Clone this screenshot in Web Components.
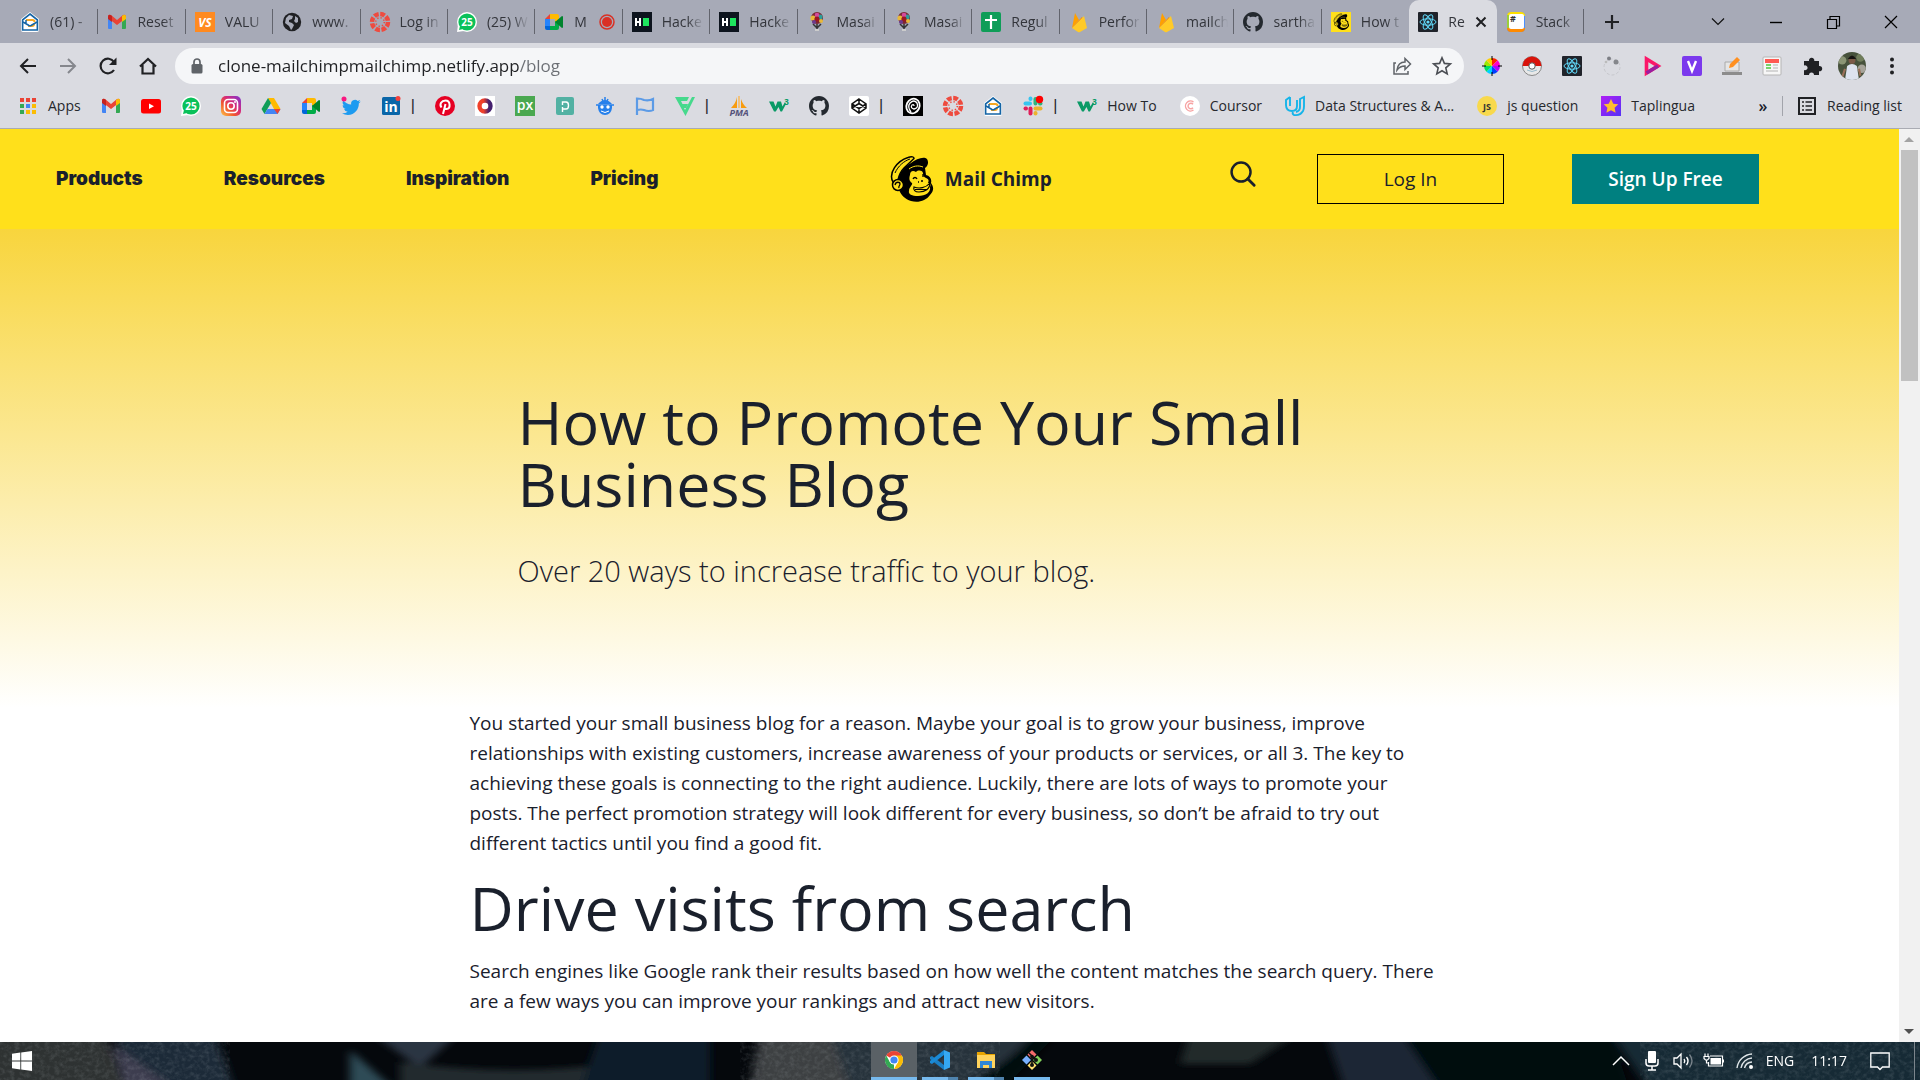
<!DOCTYPE html>
<html lang="en">
<head>
<meta charset="utf-8">
<title>How to Promote Your Small Business Blog</title>
<style>
html, body { height: 100%; margin: 0; }
body { font-family: "Open Sans", "Noto Sans", sans-serif; color: #1a202c; overflow: hidden; }
</style>
</head>
<body>
<desktop-screen></desktop-screen>
<script>
const GH = 'M8 0C3.58 0 0 3.58 0 8c0 3.54 2.29 6.53 5.47 7.59.4.07.55-.17.55-.38 0-.19-.01-.82-.01-1.49-2.01.37-2.53-.49-2.69-.94-.09-.23-.48-.94-.82-1.13-.28-.15-.68-.52-.01-.53.63-.01 1.08.58 1.23.82.72 1.21 1.87.87 2.33.66.07-.52.28-.87.51-1.07-1.78-.2-3.64-.89-3.64-3.95 0-.87.31-1.59.82-2.15-.08-.2-.36-1.02.08-2.12 0 0 .67-.21 2.2.82.64-.18 1.32-.27 2-.27.68 0 1.36.09 2 .27 1.53-1.04 2.2-.82 2.2-.82.44 1.1.16 1.92.08 2.12.51.56.82 1.27.82 2.15 0 3.07-1.87 3.75-3.65 3.95.29.25.54.73.54 1.48 0 1.07-.01 1.93-.01 2.2 0 .21.15.46.55.38A8.013 8.013 0 0016 8c0-4.42-3.58-8-8-8z';
const FREDDIE = `
<path d="M21 7C26 3 34 0 37 3c2 3 1 7-2 9l1 7c4 1 6 4 5 8 3 4 3 8-1 12-4 6-12 8-19 6-6-2-10-6-12-11l-1-10c1-7 6-13 13-17z"/>
<path d="M3 26C-2 17 7 5 18 1.500c4-1.500 6-.500 6 1L14 12c-3 3-5 7-6 12z" fill="#ffe01b" stroke="#000" stroke-width="1.500"/>
<path d="M5 17C8 10 14 5 20 3" fill="none" stroke="#000" stroke-width="1"/>
<path d="M20 19c0-4 3-5 6-3 2-2 6-2 7 1 0 3 1 4 3 5 3 1 3 3 2 5 3 0 3 2 2 4 1 5-4 9-12 9-6 0-10-2-9-5 0-4 4-6 3-8-3-2-3-5-2-8z" fill="#ffe01b"/>
<path d="M19 13c4-3 9-4 14-2" stroke="#ffe01b" stroke-width="1" fill="none"/>
<circle cx="8" cy="29" r="5.500" fill="#ffe01b" stroke="#000" stroke-width="1.500"/>
<path d="M5 29c1-4 5-3 5-1 0 2-2 2-1 4" fill="none" stroke="#000" stroke-width="1.300"/>
<path d="M23 23c1-2 3-2 4 0M33 18v3M28 26h1M31 25h2" stroke="#000" stroke-width="1.300" fill="none"/>
<path d="M24 31c5 2 12 1 16-4 0 6-5 9-11 9-4 0-6-2-5-5zM25 33.500h12" fill="none" stroke="#000" stroke-width="1.200"/>`;
const REACT = '<rect width="20" height="20" rx="1" fill="#20232a"/><g fill="none" stroke="#61dafb"><ellipse cx="10" cy="10" rx="8" ry="3.2"/><ellipse cx="10" cy="10" rx="8" ry="3.2" transform="rotate(60 10 10)"/><ellipse cx="10" cy="10" rx="8" ry="3.2" transform="rotate(120 10 10)"/></g><circle cx="10" cy="10" r="1.6" fill="#61dafb"/>';
const T = (s, x, y, size, fill, extra = '') => `<text x="${x}" y="${y}" font-size="${size}" fill="${fill}" text-anchor="middle" font-family="Open Sans" font-weight="700" ${extra}>${s}</text>`;
const MEET = '<path d="M1 7l5-5v5z" fill="#ea4335"/><path d="M1 7h5v7H1z" fill="#2684fc"/><path d="M1 14h5v4H3q-2 0-2-2z" fill="#0066da"/><path d="M6 2h7q2 0 2 2v4l-4 3V7H6z" fill="#ffba00"/><path d="M6 18h7q2 0 2-2v-4l-4-3v5H6z" fill="#00ac47"/><path d="M11 10l7-6q1 0 1 1v10q0 1-1 1z" fill="#00832d"/>';
const BIRD = 'M23.95 4.57a10 10 0 01-2.82.77 4.96 4.96 0 002.16-2.72c-.95.55-2 .96-3.13 1.18a4.92 4.92 0 00-8.38 4.48C7.69 8.09 4.07 6.13 1.64 3.16a4.92 4.92 0 001.52 6.57 4.9 4.9 0 01-2.23-.61v.06a4.92 4.92 0 003.95 4.83 4.9 4.9 0 01-2.21.08 4.94 4.94 0 004.6 3.42A9.87 9.87 0 010 19.54a13.99 13.99 0 007.55 2.21c9.05 0 14-7.5 14-13.98 0-.21 0-.42-.02-.63a9.94 9.94 0 002.46-2.55z';
const ICONS = {
  mail: '<path d="M10 0l9 7v11q0 2-2 2H3q-2 0-2-2V7z" fill="#fff"/><path d="M10 2l7.400 5.800V18H2.600V7.800z" fill="none" stroke="#1464a5" stroke-width="1.700"/><path d="M6 8h6.500q2 0 2 2M14 12q0 2-2 2H8" fill="none" stroke="#f7a823" stroke-width="2"/><path d="M3 10l6 3.500q1 .5 2 0l6-3.500M6 11V8" fill="none" stroke="#1464a5" stroke-width="1.500"/>',
  gmail: '<path d="M1 5v11q0 1 1 1h3V8z" fill="#4285f4"/><path d="M19 5v11q0 1-1 1h-3V8z" fill="#34a853"/><path d="M1 5q0-3 3-2l6 5 6-5q3-1 3 2v1l-9 7-9-7z" fill="#ea4335"/><path d="M15 4q4-3 4 1v2l-4 3z" fill="#fbbc04"/><path d="M5 4Q1 1 1 5v2l4 3z" fill="#c5221f"/>',
  vs: '<rect width="20" height="20" fill="#ff8a1f"/>' + T('VS', 10, 14.5, 12, '#fff', 'font-style="italic"'),
  globe: '<circle cx="10" cy="10" r="9.200" fill="#202124"/><path d="M4 6l3-3 4 1-1 3-3 1v2l3 1 2 2-2 4-1 1-2-4-4-3zM13 4l3 2v4l-2 1-2-2 1-2z" fill="#a8abb8"/>',
  canvas: '<circle cx="10" cy="10" r="8" fill="none" stroke="#ee4b3f" stroke-width="4.500" stroke-dasharray="4.700 1.580"/><circle cx="10" cy="10" r="4.300" fill="none" stroke="#ee4b3f" stroke-width="1.500" stroke-dasharray="1.300 2.080"/>',
  wa: '<circle cx="10" cy="10" r="10" fill="#fff"/><path d="M0 20l1-7 6 6z" fill="#fff"/><circle cx="10" cy="10" r="8.600" fill="#0ac15a"/><path d="M2 18l1-4 3 3z" fill="#0ac15a"/>' + T('25', 10, 13.5, 10, '#fff'),
  meet: MEET,
  rec: '<circle cx="10" cy="10" r="7" fill="none" stroke="#d93025" stroke-width="1.500"/><circle cx="10" cy="10" r="5" fill="#d93025"/>',
  hr: '<rect width="20" height="20" fill="#0d141e"/><path d="M4 6v8M8 6v8M4 10h4" stroke="#fff" stroke-width="2"/><rect x="11" y="6" width="6" height="8" fill="#1ee55e"/>',
  masai: '<path d="M6 12l4 4 4-4M10 12v6" stroke="#333" stroke-width="1.500" fill="none"/><circle cx="10" cy="6" r="6" fill="#7a2733"/><circle cx="6" cy="6" r="2.600" fill="#e8b83a"/><circle cx="13" cy="5" r="2.600" fill="#2d9e9a"/><circle cx="10" cy="3" r="2.300" fill="#d44a9a"/><circle cx="10" cy="7" r="2.600" fill="#9c1820"/><circle cx="14" cy="9" r="2" fill="#e8b83a"/><circle cx="7" cy="10" r="2" fill="#6c3a8c"/><path d="M8 17h4v2H8z" fill="#ccc"/>',
  sheet: '<rect width="20" height="20" rx="2" fill="#0f9d58"/><path d="M10 3v14M4 8h12" stroke="#fff" stroke-width="2.200"/>',
  fire: '<path d="M3 16L6 1l4 7z" fill="#ffa000"/><path d="M3 16L13 5l2 4z" fill="#f57c00"/><path d="M3 16L15 4l3 12-7 4q-1 .4-2 0z" fill="#ffca28"/>',
  gh: `<path transform="scale(1.25)" d="${GH}" fill="#24292f"/>`,
  chimp: `<rect width="20" height="20" fill="#ffe01b"/><g transform="translate(2.500 1.500) scale(.36)">${FREDDIE}</g>`,
  react: REACT,
  stack: '<rect x="1" y="0" width="18" height="20" rx="4" fill="#4a90ff"/><path d="M1 4q0-4 4-4h10q4 0 4 4z" fill="#ffe100"/><path d="M1 16h18q0 4-4 4H5q-4 0-4-4z" fill="#ff8a00"/><path d="M1 3h4v13H1z" fill="#9ccf3a"/><rect x="3" y="2" width="15" height="15" rx="2" fill="#fff"/>' + T('#', 7, 10, 9, '#333'),
  plus: '<path d="M10 3v14M3 10h14" stroke="#202124" stroke-width="2.200"/>',
  down: '<path d="M4 6.500l6 6 6-6" fill="none" stroke="#111" stroke-width="1.200"/>',
  min: '<path d="M4 10.500h12" stroke="#000" stroke-width="1.400"/>',
  max: '<path d="M4.500 7.500h9v9h-9zM7 7V4.500h9.500V14H14" fill="none" stroke="#000" stroke-width="1.200"/>',
  close: '<path d="M4 4l12 12M16 4L4 16" stroke="#000" stroke-width="1.200"/>',
  x: '<path d="M5.500 5.500l9 9M14.500 5.500l-9 9" stroke="#202124" stroke-width="2"/>',
  back: '<path d="M18 10H3M10 3l-7 7 7 7" fill="none" stroke="#202124" stroke-width="2"/>',
  fwd: '<path d="M2 10h15M10 3l7 7-7 7" fill="none" stroke="#85878d" stroke-width="2"/>',
  reload: '<path d="M16 14a7.300 7.300 0 110-8" fill="none" stroke="#202124" stroke-width="2.200"/><path d="M18.500 1.500v7.500H11z" fill="#202124"/>',
  home: '<path d="M2 10.500L10 3l8 7.500M4.500 9v8.500h11V9" fill="none" stroke="#202124" stroke-width="2.200"/>',
  lock: '<rect x="4.500" y="8" width="11" height="9.500" rx="1.500" fill="#5f6368"/><path d="M7 8V6a3 3 0 016 0v2" fill="none" stroke="#5f6368" stroke-width="1.700"/>',
  share: '<path d="M4 7H2v11h14v-3" fill="none" stroke="#5f6368" stroke-width="1.500"/><path d="M5 14q1-8 8-8V2.500l5.500 5.500L13 13.500V10q-5 0-8 4z" fill="none" stroke="#5f6368" stroke-width="1.500"/>',
  star: '<path d="M10 1.800l2.400 5.600 6 .500-4.600 4 1.400 6L10 14.700 4.800 17.900l1.400-6-4.600-4 6-.500z" fill="none" stroke="#4b4e54" stroke-width="1.600"/>',
  wheel: '<path d="M10 10V2a8 8 0 015.660 2.340z" fill="#ff2200"/><path d="M10 10l5.660-5.660A8 8 0 0118 10z" fill="#ff00c8"/><path d="M10 10h8a8 8 0 01-2.340 5.660z" fill="#b400ff"/><path d="M10 10l5.660 5.660A8 8 0 0110 18z" fill="#0040ff"/><path d="M10 10v8a8 8 0 01-5.660-2.340z" fill="#00cfff"/><path d="M10 10l-5.660 5.660A8 8 0 012 10z" fill="#00e060"/><path d="M10 10H2a8 8 0 012.340-5.660z" fill="#9be800"/><path d="M10 10L4.340 4.340A8 8 0 0110 2z" fill="#ffd000"/><path d="M10 0v4M10 16v4M0 10h4M16 10h4" stroke="#000"/>',
  ball: '<circle cx="10" cy="10" r="9.500" fill="#e8e8e8" stroke="#888"/><path d="M.5 10a9.500 9.500 0 0119 0z" fill="#d9130b"/><circle cx="10" cy="10" r="3.200" fill="#fff" stroke="#555"/><path d="M5 14q5 3 10 0" stroke="#9bc" fill="none"/>',
  dots: '<circle cx="10" cy="11" r="8" fill="none" stroke="#c6c7cc" stroke-dasharray="3 2"/><circle cx="7" cy="2.500" r="2" fill="#7d7f85"/><circle cx="14" cy="6" r="2.500" fill="#85878c"/><circle cx="4" cy="6" r="1.300" fill="#bbb"/>',
  play: '<path d="M4.500 3v14L16 10z" fill="none" stroke="#fb1768" stroke-width="3.600"/><path d="M4.500 17L16 10" stroke="#9a1ea0" stroke-width="3.600"/>',
  vv: '<rect width="20" height="20" rx="2" fill="#7b39ed"/><path d="M6 5l4 10 4-10" fill="none" stroke="#fff" stroke-width="2.400"/>',
  pencil: '<path d="M3 6h14v9H3z" fill="#e6e6e6" stroke="#aaa"/><path d="M0 16h20v3H0z" fill="#8c8c8c"/><path d="M7 12l1-4 7-7 3 3-7 7z" fill="#ff9020"/>',
  paper: '<rect x="1" y="1" width="18" height="18" rx="1" fill="#f7f7f7" stroke="#b5b5b5"/><path d="M3 3h14v4H3z" fill="#ff5a52"/><path d="M4 9h5M4 12h5" stroke="#79d36b" stroke-width="2"/><path d="M11 9h5M11 12h5M4 15h12" stroke="#d5d5d5" stroke-width="2"/>',
  puzzle: '<path d="M2 5h5a2.700 2.700 0 115.300 0H17v5a2.700 2.700 0 110 5.300V19h-5a2.500 2.500 0 10-5 0H2v-5a2.500 2.500 0 100-4.500z" fill="#202124"/>',
  avatar: '<defs><clipPath id="c"><circle cx="10" cy="10" r="10"/></clipPath></defs><g clip-path="url(#c)"><rect width="20" height="20" fill="#47523c"/><circle cx="3" cy="6" r="3" fill="#8b9575"/><circle cx="16" cy="4" r="3" fill="#707d5b"/><circle cx="17" cy="12" r="3" fill="#a7a49a"/><path d="M5 20l1.500-10q3.500-3 7 0L15 20z" fill="#dde3ef"/><path d="M5 12l-2 6M15 12l1 5" stroke="#9a7059" stroke-width="1.500"/><circle cx="10" cy="6" r="2.400" fill="#7b5a48"/><path d="M7 5q3-5 6 0z" fill="#171412"/></g>',
  more: '<g fill="#202124"><circle cx="10" cy="3.500" r="2"/><circle cx="10" cy="10" r="2"/><circle cx="10" cy="16.500" r="2"/></g>',
  apps: '<path d="M2 2h4v4H2zM8 2h4v4H8z" fill="#ea4335"/><path d="M14 2h4v4h-4z" fill="#ea4335"/><path d="M2 8h4v4H2z" fill="#34a853"/><path d="M8 8h4v4H8z" fill="#4285f4"/><path d="M14 8h4v4h-4z" fill="#fbbc04"/><path d="M2 14h4v4H2z" fill="#34a853"/><path d="M8 14h4v4H8zM14 14h4v4h-4z" fill="#fbbc04"/>',
  yt: '<rect y="3" width="20" height="14.500" rx="2.500" fill="#f00"/><path d="M8 7.500v5.500l5-2.700z" fill="#fff"/>',
  ig: '<defs><linearGradient id="g" x1="0" y1="1" x2="1" y2="0"><stop offset="0" stop-color="#fdc749"/><stop offset=".35" stop-color="#f1572e"/><stop offset=".6" stop-color="#d62a7a"/><stop offset="1" stop-color="#7a35d4"/></linearGradient></defs><rect width="20" height="20" rx="5" fill="url(#g)"/><rect x="3.500" y="3.500" width="13" height="13" rx="3.500" fill="none" stroke="#fff" stroke-width="1.600"/><circle cx="10" cy="10" r="3.200" fill="none" stroke="#fff" stroke-width="1.600"/><circle cx="14" cy="6" r="1" fill="#fff"/>',
  drive: '<path d="M7 2h6l6.500 11H13z" fill="#ffba00"/><path d="M7 2l3 5L3.500 18 .5 13z" fill="#0f9d58"/><path d="M6.500 13h13l-3 5h-13z" fill="#4285f4"/><path d="M13 13h6.500l-3 5z" fill="#ea4335"/>',
  bird: `<g transform="translate(1 2) scale(.78)"><path d="${BIRD}" fill="#1d9bf0"/></g><circle cx="3" cy="3" r="2.500" fill="#f91880"/>`,
  li: '<rect x="1" y="1" width="18" height="18" rx="1.500" fill="#0a66a8"/>' + T('in', 10, 15.500, 14, '#fff') + '<circle cx="17" cy="2.500" r="2.500" fill="#f5413c"/>',
  pin: '<circle cx="10" cy="10" r="10" fill="#e60023"/><path d="M8 18l2.500-10M6.500 11.500C4 8 6.500 4.500 10.500 4.500c5 0 5.500 8 1 8.500-1.500 0-2-1-2-1" fill="none" stroke="#fff" stroke-width="2"/>',
  ring: '<defs><linearGradient id="g"><stop offset=".35" stop-color="#f0402a"/><stop offset=".85" stop-color="#45206f"/></linearGradient></defs><rect width="20" height="20" fill="#fff"/><circle cx="10" cy="10" r="5.500" fill="none" stroke="url(#g)" stroke-width="4.400"/>',
  px: '<rect width="20" height="20" fill="#4aa850"/>' + T('px', 10, 14, 14, '#fff', 'style="font-weight:600"'),
  pp: '<rect x="1" y="1" width="18" height="18" rx="2" fill="#52b1a3"/><path d="M7.500 16v-5M7.500 13H11q2.500 0 2.500-3.500T11 6H7.500v3" fill="none" stroke="#fff" stroke-width="1.400"/>',
  robot: '<path d="M3 8q7-8 14 0z" fill="#2680eb"/><path d="M10 1v4M7 3l1 2M13 3l-1 2M1 9h18" stroke="#2680eb" stroke-width="1.500"/><path d="M3 9h14v3q-1 7-7 7t-7-7z" fill="#2680eb"/><circle cx="7" cy="11" r="1.700" fill="#fff"/><circle cx="13" cy="11" r="1.700" fill="#fff"/><path d="M6 15q4 3 8 0" stroke="#fff" fill="none"/>',
  flag: '<path d="M2 19V2.500q4 0 7 1.500 5 1 9-1v11q-4 2-9 0-3-1-7 0" fill="none" stroke="#5c9be6" stroke-width="2.200"/>',
  vtri: '<path d="M0 1h14l-2 4H6l1.500 3H13l-2 4H9l1 2L17 1h3L10.500 20z" fill="#45d98c"/>',
  pma: '<path d="M8 1q-1 6-6 11h6zM12 3v9h6q-4-3-6-9z" fill="#f89c0e"/><path d="M10 0v12" stroke="#f8b95a" stroke-width="1.500"/>' + T('PMA', 10, 19.500, 9, '#54527a', 'font-style="italic"'),
  w3: '<path d="M0 5.500h4.500l2 5 2-5H12l1.500 5L16 6l1 2-4 7.500h-1.500L9.500 11l-2.700 4.500H5z" fill="#0a9a66"/>' + T('3', 17.500, 8.500, 8, '#0a9a66'),
  cpen: '<rect width="20" height="20" rx="2" fill="#fff"/><path d="M10 3l7 5v4l-7 5-7-5V8zM3 8l7 4.500L17 8M3 12l7-4.500 7 4.500M10 3v4.500M10 12.500V17" fill="none" stroke="#111" stroke-width="1.500"/>',
  swirl: '<rect width="20" height="20" fill="#000"/><ellipse cx="10" cy="10" rx="6.500" ry="7.500" fill="none" stroke="#fff" stroke-width="1.800" transform="rotate(25 10 10)"/><path d="M8 16q-4-5-1-9 4-4 7 0 2 5-3 6-4-1-2-4 2-1 2 1" fill="none" stroke="#fff" stroke-width="1.300"/>',
  slack: '<g stroke-width="4" stroke-linecap="round"><path d="M2.500 7.500H7" stroke="#36c5f0"/><path d="M7.500 2.500v.5" stroke="#36c5f0"/><path d="M12.500 3v4.500" stroke="#2eb67d"/><path d="M17 7.500h.5" stroke="#2eb67d"/><path d="M12.500 12.500h5" stroke="#ecb22e"/><path d="M12.500 17v.5" stroke="#ecb22e"/><path d="M7.500 12.500v5" stroke="#e01e5a"/><path d="M2.500 12.500H3" stroke="#e01e5a"/></g><circle cx="16.500" cy="3.500" r="3.700" fill="#f00"/>',
  cc: '<circle cx="10" cy="10" r="10" fill="#fff"/><path d="M13.500 6a5 5 0 100 8M13 8.200a2.800 2.800 0 100 3.600" fill="none" stroke="#f7a3a3" stroke-width="1.400"/>',
  uu: '<path d="M5 1L1 4v5q0 6 6 6 5 0 5-5V4M5 1v9M8 16q-1 2 1 3 6 1 9-4 1-2 1-5V1l-4 2v8q0 4-4 5" fill="none" stroke="#15b4e9" stroke-width="1.900"/>',
  js: '<circle cx="10" cy="10" r="10" fill="#f8d94c"/>' + T('JS', 10, 13.5, 9, '#333'),
  tap: '<defs><linearGradient id="g" x2="1" y2="1"><stop stop-color="#b01ef5"/><stop offset="1" stop-color="#5533f5"/></linearGradient></defs><rect width="20" height="20" fill="url(#g)"/><path d="M10 3l2.300 4.700 5 .500-3.700 3.500 1 5L10 14.300 5.400 16.700l1-5L2.700 8.200l5-.500z" fill="#ffbd2e"/>',
  list: '<path d="M2 2h16v16H2z" fill="none" stroke="#202124" stroke-width="2"/><path d="M5 6h2M5 10h2M5 14h2M8.500 6H15M8.500 10H15M8.500 14H15" stroke="#202124" stroke-width="1.700"/>',
  search: '<circle cx="8.500" cy="8.500" r="7.300" fill="none" stroke="#1a202c" stroke-width="1.900"/><path d="M13.600 13.600l5 5" stroke="#1a202c" stroke-width="2.200" stroke-linecap="round"/>',
  win: '<path d="M0 2.800L8.300 1.600v8H0zM9.200 1.500L20 0v9.600H9.200zM0 10.500h8.300v8L0 17.300zM9.200 10.500H20V20L9.200 18.600z" fill="#fff"/>',
  chrome: '<circle cx="10" cy="10" r="9" fill="#fff"/><path d="M10 10L2.200 5.500A9 9 0 0117.800 5.500z" fill="#ea4335"/><path d="M10 5.500h7.800A9 9 0 0110 19l4-7z" fill="#fbbc04"/><path d="M2.200 5.500L6 12.300l4 2L10 19A9 9 0 012.200 5.500z" fill="#34a853"/><circle cx="10" cy="10" r="4.600" fill="#fff"/><circle cx="10" cy="10" r="3.600" fill="#4285f4"/>',
  code: '<path d="M0 7l2-1 12 9v5L0 9z" fill="#1b7fc4"/><path d="M0 13l2 1 12-9V0L0 11z" fill="#1a8ad6"/><path d="M14 0l6 2.500v15L14 20z" fill="#35a8f2"/>',
  files: '<path d="M1 2h7l2 2h9v4H1z" fill="#e8a400"/><path d="M1 5h18v13H1z" fill="#ffd35c"/><path d="M4 18v-7h12v7h-3v-3H7v3z" fill="#2f86d6"/>',
  git: '<path d="M10 0l4.500 4.500L10 9 5.500 4.500z" fill="#f66b6b"/><path d="M4.500 5.500L9 10l-4.500 4.500L0 10z" fill="#78b0ff"/><path d="M15.500 5.500L20 10l-4.500 4.500L11 10z" fill="#82d05a"/><path d="M10 11l4.500 4.500L10 20l-4.500-4.500z" fill="#ffe070"/><path d="M7 3l3 3v9M10 6l4 4" stroke="#111" stroke-width="1.600" fill="none"/><circle cx="10" cy="15" r="2" fill="#111"/><circle cx="14" cy="10" r="2" fill="#111"/><circle cx="10" cy="6.500" r="1.800" fill="#111"/>',
  up: '<path d="M2 14l8-8 8 8" fill="none" stroke="#fff" stroke-width="1.500"/>',
  mic: '<rect x="6" y="0" width="8" height="12" rx="1" fill="#fff"/><path d="M4 8v4q0 3 3 3h6q3 0 3-3V8M10 15v4M6 19h8" fill="none" stroke="#fff" stroke-width="1.500"/>',
  sound: '<path d="M1 7h3l4-4v14l-4-4H1z" fill="none" stroke="#fff" stroke-width="1.300"/><path d="M11 8q1.500 2 0 4M13.500 6q3 4 0 8" fill="none" stroke="#fff" stroke-width="1.400"/><path d="M16.500 3.500q5 6.500 0 13" fill="none" stroke="#7b858c" stroke-width="1.300"/>',
  battery: '<path d="M6 5h12.500v10H4.500v-4" fill="none" stroke="#fff" stroke-width="1.200"/><path d="M6.500 7h10.500v6.500H6.500zM19 8.500h1v3h-1z" fill="#fff"/><path d="M1 2.500v3M4 2.500v3M0 5.500h5v2L3.500 9h-2L0 7.500zM2.500 9v3h2" stroke="#fff" fill="none" stroke-width="1.200"/>',
  wifi: '<path d="M2 17A16 16 0 0117 3M6 17A12 12 0 0117 7M9.500 17A8 8 0 0117 11" fill="none" stroke="#dfe5e8" stroke-width="1.400"/><circle cx="16" cy="16" r="2" fill="#fff"/>',
  note: '<path d="M.8 2h18.400v14h-6.700L10 18.500 7.500 16H.8z" fill="none" stroke="#fff" stroke-width="1.300"/>'
};
function define(name, css, html) {
  const tpl = document.createElement('template');
  tpl.innerHTML = `<style>*{box-sizing:border-box}button{font:inherit;color:inherit;background:none;border:0;padding:0;margin:0;display:flex;align-items:center;justify-content:center}a{color:inherit;text-decoration:none}${css}</style>${html}`;
  customElements.define(name, class extends HTMLElement {
    constructor() { super(); this.attachShadow({ mode: 'open' }).append(tpl.content.cloneNode(true)); }
  });
}
const ic = (n, s = '') => `<ui-icon name="${n}" class="${s}"></ui-icon>`;

customElements.define('ui-icon', class extends HTMLElement {
  constructor() { super(); this.attachShadow({ mode: 'open' }); }
  connectedCallback() {
    this.shadowRoot.innerHTML = `<style>:host{display:block;flex:none;width:var(--icon,20px);height:var(--icon,20px)}svg{display:block;width:100%;height:100%;overflow:visible}</style><svg viewBox="0 0 20 20" aria-hidden="true">${ICONS[this.getAttribute('name')]}</svg>`;
  }
});

define('freddie-logo', ':host{display:block;width:44px;height:46px}svg{display:block}', `<svg viewBox="0 0 44 46" width="44" height="46" aria-hidden="true">${FREDDIE}</svg>`);

define('browser-tab', `
:host{display:flex;flex:1 1 0;min-width:0;height:44px;position:relative}
button.tab{flex:1;min-width:0;gap:10px;padding:0 6px 0 9px;justify-content:flex-start}
:host(:not([active]):not([before])) .tab{background:linear-gradient(#62646d,#62646d) right 9px / 1px 25px no-repeat}
.label{flex:1;min-width:0;overflow:hidden;white-space:nowrap;text-align:left;font-size:14px;line-height:20px;color:#33353b;-webkit-mask-image:linear-gradient(90deg,#000 60%,transparent)}
:host([active]){background:#dadbe1;border-radius:10px 10px 0 0}
::slotted([slot=end]){margin-left:-12px}
`, '<button class="tab" role="tab"><slot name="icon"></slot><span class="label"><slot></slot></span><slot name="end"></slot></button>');

define('tab-strip', `
:host{display:flex;align-items:center;height:43px;background:#a7aab7;overflow:hidden}
.tabs{display:flex;flex:1;min-width:0;padding-left:11px}
.add{width:55px;height:43px}
.controls{display:flex;width:281px;padding-left:50px}
.controls button{width:58px;height:38px;align-items:center}
`, `<div class="tabs" role="tablist"><slot></slot></div>
<button class="add" aria-label="New tab">${ic('plus')}</button>
<div class="controls"><button aria-label="Search tabs">${ic('down')}</button><button aria-label="Minimize">${ic('min')}</button><button aria-label="Restore">${ic('max')}</button><button aria-label="Close">${ic('close')}</button></div>`);

define('address-bar', `
:host{display:flex;align-items:center;height:45px;background:#dadbe1;padding:0 8px 0 8px}
.nav{display:flex}.nav button{width:40px;height:36px}
.box{display:flex;align-items:center;flex:1;height:36px;margin-left:7px;border-radius:18px;background:#f5f6f8;padding:0 2px 0 12px}
input{flex:1;min-width:0;border:0;outline:0;margin-left:11px;padding:0;height:30px;font-family:inherit;font-size:17px;background:linear-gradient(90deg,#202124 var(--host-part),#6b6e74 0) text;-webkit-text-fill-color:transparent}
.box button{width:40px;height:36px}
.ext{display:flex;margin-left:8px}.ext button{width:40px;height:36px}
.avatar{--icon:28px}
`, `<div class="nav"><button aria-label="Back">${ic('back')}</button><button aria-label="Forward">${ic('fwd')}</button><button aria-label="Reload">${ic('reload')}</button><button aria-label="Home">${ic('home')}</button></div>
<div class="box">${ic('lock')}<input aria-label="Address" style="--host-part:301px" value="clone-mailchimpmailchimp.netlify.app/blog"><button aria-label="Share">${ic('share')}</button><button aria-label="Bookmark">${ic('star')}</button></div>
<div class="ext">${['wheel', 'ball', 'react', 'dots', 'play', 'vv', 'pencil', 'paper', 'puzzle'].map(n => `<button aria-label="${n}">${ic(n)}</button>`).join('')}<button class="avatar" aria-label="Profile">${ic('avatar')}</button><button aria-label="Menu">${ic('more')}</button></div>`);

define('book-mark', `
:host{display:block;flex:none}
:host([bar]) a{font-family:"Liberation Sans",sans-serif;font-size:16px}
:host([named]) a{padding-right:3px}
a{display:flex;align-items:center;gap:10px;font-size:14px;line-height:20px;color:#26282d;white-space:nowrap}
`, '<a href="#"><slot name="icon"></slot><slot></slot></a>');

define('bookmark-bar', `
:host{display:flex;align-items:center;height:41px;padding:0 18px 4px;background:#dadbe1;border-bottom:1px solid #a9abb3}
.items{display:flex;flex:1;gap:20px;min-width:0}
.end{display:flex;align-items:center;gap:14px}
.end button{font-size:16px;font-weight:600;line-height:20px;width:10px}
i{width:1px;height:20px;background:#a2a4ab}
`, '<div class="items"><slot></slot></div><div class="end"><button aria-label="More bookmarks">»</button><i></i><slot name="end"></slot></div>');

define('site-header', `
:host{display:grid;grid-template-columns:auto 235fr auto 181fr auto;align-items:center;height:100px;padding:0 140px 0 56px;background:#ffe01b}
nav{display:flex;gap:81px;font:900 19px/24px Inter,sans-serif}
.logo{grid-column:3;display:flex;align-items:center;gap:11px;font-size:19px;font-weight:700;line-height:24px}
.actions{grid-column:5;display:flex;align-items:center}
.find{--icon:26px;align-self:flex-start;margin:7px 61px 0 0}
.act{width:187px;height:50px;font-size:19px;line-height:24px}
.login{border:1px solid #000;margin-right:68px}
.join{background:#008080;color:#fff;font-weight:600}
`, `<nav><a href="#">Products</a><a href="#">Resources</a><a href="#">Inspiration</a><a href="#">Pricing</a></nav>
<a class="logo" href="#"><freddie-logo></freddie-logo><span>Mail Chimp</span></a>
<div class="actions"><button class="find" aria-label="Search">${ic('search')}</button><button class="act login">Log In</button><button class="act join">Sign Up Free</button></div>`);

define('page-hero', `
:host{display:block;height:479px;padding-top:162px;background:linear-gradient(#f8d53d,#fff)}
.inner{width:864px;margin:0 auto}
h1{margin:0;font-weight:400;font-size:61px;line-height:62px}
p{margin:34px 0 0;font-weight:300;font-size:29px;line-height:44px}
`, '<div class="inner"><h1><slot></slot></h1><p><slot name="lead"></slot></p></div>');

define('blog-article', `
:host{display:block;box-sizing:border-box;width:980px;margin:0 auto;padding-left:10px}
::slotted(p){margin:0;font-size:19px;line-height:30px}
::slotted(h2){margin:0;padding:14px 0 12px;font-weight:400;font-size:61px;line-height:72px}
`, '<slot></slot>');

define('scroll-bar', `
:host{display:flex;flex-direction:column;width:21px;background:#f1f1f1}
svg{display:block;flex:none}
.track{flex:1;display:flex;flex-direction:column}.thumb{flex:231;margin:0 2px;background:#c1c1c1}.rest{flex:640}
`, '<svg width="21" height="21"><path d="M5 13h10l-5-5z" fill="#a3a3a3"/></svg><div class="track"><div class="thumb"></div><div class="rest"></div></div><svg width="21" height="21"><path d="M5 8h10l-5 5z" fill="#505050"/></svg>');

define('wall-paper', ':host{display:block}svg{display:block;width:100%;height:100%}', `
<svg viewBox="0 0 1920 38" preserveAspectRatio="none" aria-hidden="true">
<defs><filter id="s" x="-5%" y="-50%" width="110%" height="200%"><feGaussianBlur stdDeviation="5 3"/></filter>
<filter id="n" x="0" y="0" width="100%" height="100%"><feTurbulence type="fractalNoise" baseFrequency=".2 .25" numOctaves="3" seed="4"/><feColorMatrix values="0 0 0 0 .6  0 0 0 0 .65  0 0 0 0 .68  1.4 0 0 0 -.55"/></filter></defs>
<rect width="1920" height="38" fill="#05080c"/>
<g filter="url(#s)">
<path d="M-20 -10h125l20 58H-20z" fill="#2e3231"/><path d="M115 -10h100l20 58H130z" fill="#1f2a37"/>
<path d="M112 2l64 46h-50z" fill="#3c3c50"/><path d="M350 8l45 40h-45z" fill="#2e4c57"/><path d="M370 -10h90l-40 36z" fill="#2c3642"/>
<path d="M400 20q120 16 220 0l30 28H400z" fill="#232b2d"/><path d="M600 -10h110v58H580z" fill="#101d2a"/>
<path d="M760 -10h100v58H750z" fill="#3c4143"/><path d="M830 -10h220l-60 58H850z" fill="#26303b"/><path d="M1060 -10h-25q-25 30-65 50h40z" fill="#05080c"/>
<path d="M1190 -10h110l-50 32h-70z" fill="#212a2a"/><path d="M1325 -10h85l60 58h-125z" fill="#1b2834"/><path d="M1400 -10h210l20 58H1440z" fill="#05080c"/><path d="M1610 -10h320v58h-280z" fill="#162936"/></g>
<g opacity=".22"><rect width="230" height="38" filter="url(#n)"/><rect x="740" width="260" height="38" filter="url(#n)"/><rect x="1640" width="280" height="38" filter="url(#n)"/></g>
</svg>`);

define('task-button', `
:host{display:flex;width:36px;height:38px;border-bottom:3px solid #76b9ed}
:host([wide]){width:46px;background:#5a6166}
:host([stacked]){border-image:linear-gradient(90deg,#76b9ed 68%,#4f83ad 0) 3}
button{flex:1}
`, '<button><slot></slot></button>');

define('task-bar', `
:host{display:grid;grid-template-columns:1fr auto 1fr;align-items:center;height:38px;color:#fff;font-size:14px;line-height:20px}
wall-paper,.row{grid-row:1}wall-paper{grid-column:1/-1;height:38px;min-width:0}
.row{display:flex;align-items:center;height:38px;z-index:1}
.start{grid-column:1;padding-left:12px}
.apps{grid-column:2;gap:10px}
.apps task-button:first-child{margin-right:-5px}
.tray{grid-column:3;justify-content:flex-end;gap:11px}
.tray .clock{margin:0 12px 0 6px}
.edge{width:6px;height:38px;border-left:1px solid #7c858c;margin-left:13px}
`, `<wall-paper></wall-paper>
<div class="row start"><button aria-label="Start">${ic('win')}</button></div>
<div class="row apps"><task-button wide aria-label="Chrome">${ic('chrome')}</task-button><task-button stacked aria-label="Code">${ic('code')}</task-button><task-button stacked aria-label="Files">${ic('files')}</task-button><task-button aria-label="Git">${ic('git')}</task-button></div>
<div class="row tray">${['up', 'mic', 'sound', 'battery', 'wifi'].map(n => `<button aria-label="${n}">${ic(n)}</button>`).join('')}<span>ENG</span><span class="clock">11:17</span><button aria-label="Notifications">${ic('note')}</button><div class="edge"></div></div>`);

const tabs = [['mail', '(61) -'], ['gmail', 'Reset'], ['vs', 'VALU'], ['globe', 'www.'], ['canvas', 'Log in'], ['wa', '(25) W'], ['meet', 'M', 'rec'], ['hr', 'Hacke'], ['hr', 'Hacke'], ['masai', 'Masai'], ['masai', 'Masai'], ['sheet', 'Regul'], ['fire', 'Perfor'], ['fire', 'mailch'], ['gh', 'sartha'], ['chimp', 'How t', '', 'before'], ['react', 'Re', 'x', 'active'], ['stack', 'Stack']];
const marks = [['apps', 'Apps'], ['gmail'], ['yt'], ['wa'], ['ig'], ['drive'], ['meet'], ['bird'], ['li', '|'], ['pin'], ['ring'], ['px'], ['pp'], ['robot'], ['flag'], ['vtri', '|'], ['pma'], ['w3'], ['gh'], ['cpen', '|'], ['swirl'], ['canvas'], ['mail'], ['slack', '|'], ['w3', 'How To', 'named'], ['cc', 'Coursor', 'named'], ['uu', 'Data Structures &amp; A...', 'named'], ['js', 'js question', 'named'], ['tap', 'Taplingua', 'named']];
const slotIcon = (n, s) => `<ui-icon name="${n}" slot="${s}"></ui-icon>`;

define('desktop-screen', `
:host{display:flex;flex-direction:column;height:100vh;overflow:hidden;background:#fff}
tab-strip,address-bar,bookmark-bar,task-bar{flex:none}
.view{display:flex;flex:1;min-height:0}
main{flex:1;min-width:0;overflow:hidden}
`, `<tab-strip>${tabs.map(([i, t, e, a]) => `<browser-tab ${a || ''}>${slotIcon(i, 'icon')}${t}${e ? slotIcon(e, 'end') : ''}</browser-tab>`).join('')}</tab-strip>
<address-bar></address-bar>
<bookmark-bar>${marks.map(([i, t, k]) => `<book-mark ${t === '|' ? 'bar' : k || ''}>${slotIcon(i, 'icon')}${t || ''}</book-mark>`).join('')}<book-mark slot="end">${slotIcon('list', 'icon')}Reading list</book-mark></bookmark-bar>
<div class="view"><main><site-header></site-header>
<page-hero>How to Promote Your Small Business Blog<span slot="lead">Over 20 ways to increase traffic to your blog.</span></page-hero>
<blog-article><p>You started your small business blog for a reason. Maybe your goal is to grow your business, improve relationships with existing customers, increase awareness of your products or services, or all 3. The key to achieving these goals is connecting to the right audience. Luckily, there are lots of ways to promote your posts. The perfect promotion strategy will look different for every business, so don’t be afraid to try out different tactics until you find a good fit.</p>
<h2>Drive visits from search</h2>
<p>Search engines like Google rank their results based on how well the content matches the search query. There are a few ways you can improve your rankings and attract new visitors.</p></blog-article></main>
<scroll-bar></scroll-bar></div>
<task-bar></task-bar>`);
</script>
</body>
</html>
